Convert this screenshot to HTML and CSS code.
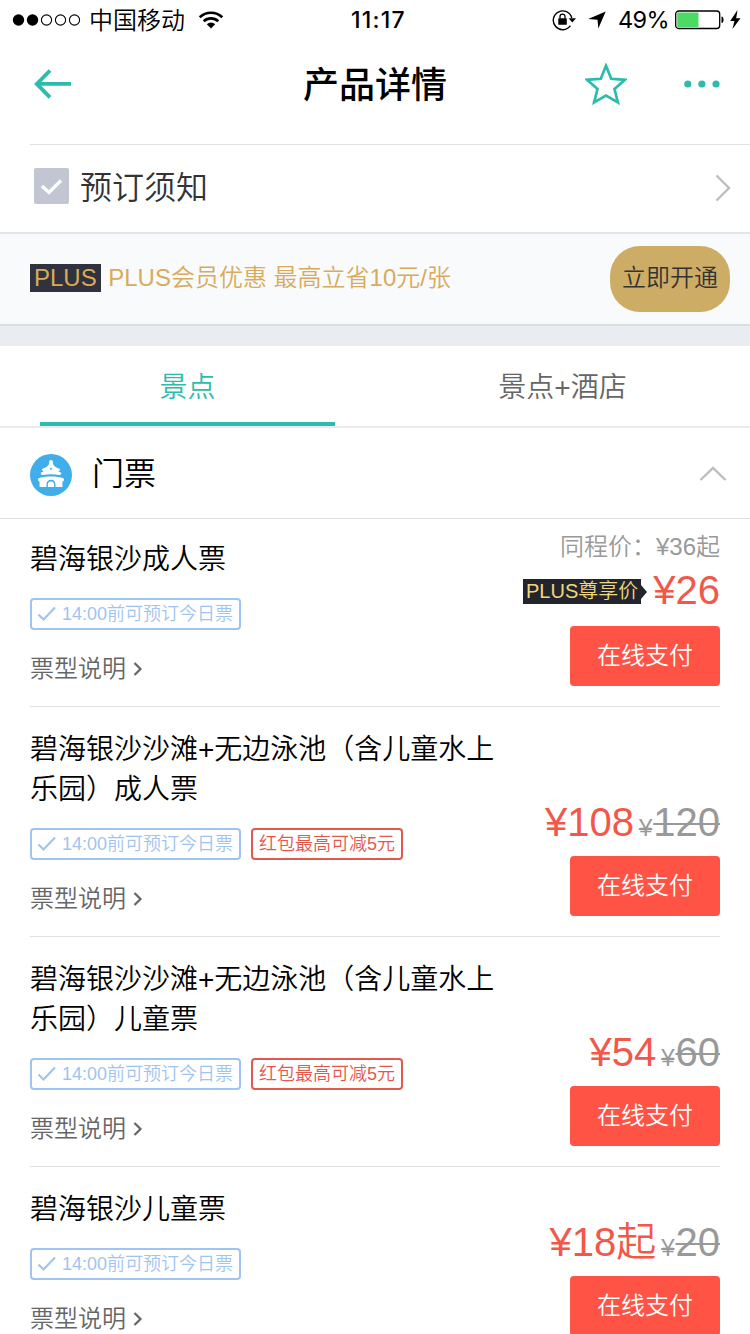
FILE: index.html
```html
<!DOCTYPE html>
<html lang="zh-CN">
<head>
<meta charset="utf-8">
<title>产品详情</title>
<link rel="stylesheet" href="styles.css">
</head>
<body>
<svg class="defs" width="0" height="0">
  <symbol id="check" viewBox="0 0 20 18"><path d="M1.500 9.500l5 5L18 2.500" fill="none" stroke="currentColor" stroke-width="2.200"/></symbol>
  <symbol id="more" viewBox="0 0 10 16"><path d="M1.500 2l6 6-6 6" fill="none" stroke="currentColor" stroke-width="2.200"/></symbol>
</svg>
<div class="screen">
  <div class="status">
    <div class="status-left">
      <svg width="70" height="14" viewBox="0 0 70 14"><circle cx="6.500" cy="7" r="5.700"/><circle cx="20.500" cy="7" r="5.700"/><g fill="none" stroke="#000" stroke-width="1.100"><circle cx="34.500" cy="7" r="5.100"/><circle cx="48.500" cy="7" r="5.100"/><circle cx="62.500" cy="7" r="5.100"/></g></svg>
      <span class="carrier">中国移动</span>
      <svg class="wifi" width="26" height="20" viewBox="0 0 26 20"><g fill="none" stroke="#000" stroke-width="2.600"><path d="M1.700 7.300a16.200 16.200 0 0 1 22.600 0"/><path d="M5.700 11.300a10.600 10.600 0 0 1 14.600 0"/></g><path d="M13 18.500l-4.200-4.200a6 6 0 0 1 8.400 0z"/></svg>
    </div>
    <div class="clock">11:17</div>
    <div class="status-right">
      <svg class="lock" width="24" height="22" viewBox="0 0 24 22"><path d="M18.400 16.700A9.400 9.400 0 1 1 19.800 9" fill="none" stroke="#000" stroke-width="1.400"/><path d="M16.600 9.200H24L20.300 13.400z"/><rect x="6.300" y="9.300" width="8.500" height="6.500" rx=".6"/><path d="M8 9.500V7.600a2.500 2.500 0 0 1 5 0v1.900" fill="none" stroke="#000" stroke-width="1.300"/></svg>
      <svg class="locate" width="18" height="18" viewBox="0 0 18 18"><path d="M17.700.4L10.300 17.500 9.500 8.800.2 8z"/></svg>
      <span class="percent">49%</span>
      <svg width="66" height="20" viewBox="0 0 66 20"><rect x=".7" y="1" width="44" height="17.500" rx="3" fill="none" stroke="#000" stroke-width="1.300"/><rect x="2.200" y="2.600" width="21.300" height="14.400" rx="1" fill="#4cd964"/><path d="M46.500 6.500c2.800.3 2.800 6.300 0 6.600z"/><path d="M62.500 0l-7.300 11h4.200l-1.900 8 8-10.800h-4.300z"/></svg>
    </div>
  </div>

  <div class="nav">
    <svg class="back" width="38" height="30" viewBox="0 0 38 30"><path d="M16 1.500L2.800 14.900 16 28.300M3 14.900h34" fill="none" stroke="#2cbbae" stroke-width="3.800"/></svg>
    <h1>产品详情</h1>
    <div class="nav-actions">
      <svg width="42" height="42" viewBox="0 0 42 42"><path d="M21 2.800l5.200 13 13.800 1-10.500 9.200 3.400 13.400L21 32.600 9.100 39.400 12.500 26 2 16.800l13.800-1z" fill="none" stroke="#2cbbae" stroke-width="2.700"/></svg>
      <svg width="36" height="8" viewBox="0 0 36 8" fill="#2cbbae"><circle cx="3.800" cy="4" r="3.600"/><circle cx="17.900" cy="4" r="3.600"/><circle cx="32" cy="4" r="3.600"/></svg>
    </div>
  </div>

  <div class="notice">
    <svg class="notice-icon" width="35" height="36" viewBox="0 0 35 36"><rect width="35" height="36" rx="2" fill="#c1c6d2"/><path d="M8 18l7 6.500L27 12.500" fill="none" stroke="#fff" stroke-width="3.300"/></svg>
    <span class="notice-text">预订须知</span>
    <svg class="go" width="16" height="28" viewBox="0 0 16 28"><path d="M1.500 1.500L14 14 1.500 26.500" fill="none" stroke="#bdbdbd" stroke-width="2.400"/></svg>
  </div>

  <div class="plus">
    <span class="plus-badge">PLUS</span>
    <span class="plus-text">PLUS会员优惠 最高立省10元/张</span>
    <span class="plus-button">立即开通</span>
  </div>
  <div class="divider"></div>

  <div class="tabs">
    <div class="tab active">景点</div>
    <div class="tab">景点+酒店</div>
  </div>

  <div class="group">
    <svg class="group-icon" width="42" height="42" viewBox="0 0 42 42"><circle cx="21" cy="21" r="21" fill="#40aeea"/><g fill="#fff"><circle cx="21" cy="7.800" r="1.900"/><path d="M19.700 7.500h2.600l.8 2.700c1.200 2.300 3.400 3.500 6.400 4.500 1 1.100.3 2.300-1.300 2.600.7.700 1.700 1 2.800 1.300.8 1.200-.1 2.400-1.500 2.500-5.500-1-11.500-1-17 0-1.400-.1-2.300-1.300-1.500-2.500 1.100-.3 2.100-.6 2.800-1.300-1.600-.3-2.300-1.500-1.300-2.600 3-1 5.200-2.200 6.400-4.500z"/><path d="M8.200 24.400c6.800-2.400 18.800-2.400 25.600 0 .6 1.500-.2 2.900-1.400 3.400V33H25.500v-2.700a4.500 4.500 0 0 0-9 0V33H9.600v-5.200c-1.200-.5-2-1.900-1.400-3.400z"/><path d="M17.900 33v-2.500a3.100 3.100 0 0 1 6.200 0V33z"/></g><path d="M21 13.200l1.100 1.500-1.100 1.500-1.100-1.500z" fill="#40aeea"/></svg>
    <span class="group-title">门票</span>
    <svg class="fold" width="28" height="16" viewBox="0 0 28 16"><path d="M1.500 14L14 2l12.500 12" fill="none" stroke="#bdbdbd" stroke-width="2.400"/></svg>
  </div>

  <div class="tickets">
    <div class="ticket">
      <div class="info">
        <div class="name">碧海银沙成人票</div>
        <div class="tags"><span class="tag blue"><svg width="20" height="18"><use href="#check"/></svg>14:00前可预订今日票</span></div>
        <div class="explain">票型说明<svg width="10" height="16"><use href="#more"/></svg></div>
      </div>
      <div class="buy">
        <div class="list-price">同程价：¥36起</div>
        <div class="price member"><span class="member-tag">PLUS尊享价</span><span class="now">¥26</span></div>
        <div class="pay">在线支付</div>
      </div>
    </div>
    <div class="ticket">
      <div class="info">
        <div class="name">碧海银沙沙滩+无边泳池（含儿童水上<br>乐园）成人票</div>
        <div class="tags"><span class="tag blue"><svg width="20" height="18"><use href="#check"/></svg>14:00前可预订今日票</span><span class="tag red">红包最高可减5元</span></div>
        <div class="explain">票型说明<svg width="10" height="16"><use href="#more"/></svg></div>
      </div>
      <div class="buy">
        <div class="price"><span class="now">¥108</span><s class="yen">¥</s><s class="was">120</s></div>
        <div class="pay">在线支付</div>
      </div>
    </div>
    <div class="ticket">
      <div class="info">
        <div class="name">碧海银沙沙滩+无边泳池（含儿童水上<br>乐园）儿童票</div>
        <div class="tags"><span class="tag blue"><svg width="20" height="18"><use href="#check"/></svg>14:00前可预订今日票</span><span class="tag red">红包最高可减5元</span></div>
        <div class="explain">票型说明<svg width="10" height="16"><use href="#more"/></svg></div>
      </div>
      <div class="buy">
        <div class="price"><span class="now">¥54</span><s class="yen">¥</s><s class="was">60</s></div>
        <div class="pay">在线支付</div>
      </div>
    </div>
    <div class="ticket">
      <div class="info">
        <div class="name">碧海银沙儿童票</div>
        <div class="tags"><span class="tag blue"><svg width="20" height="18"><use href="#check"/></svg>14:00前可预订今日票</span></div>
        <div class="explain">票型说明<svg width="10" height="16"><use href="#more"/></svg></div>
      </div>
      <div class="buy">
        <div class="price"><span class="now">¥18起</span><s class="yen">¥</s><s class="was">20</s></div>
        <div class="pay">在线支付</div>
      </div>
    </div>
  </div>
</div>
</body>
</html>
```
FILE: styles.css
```css
* { box-sizing: border-box; }
html, body { margin: 0; height: 1334px; overflow: hidden; background: #fff; }
body { font-family: "Liberation Sans", "Noto Sans CJK SC", sans-serif; font-weight: 350; color: #000; }
svg { display: block; flex: none; }
.defs { position: absolute; }
.screen { width: 750px; height: 1334px; overflow: hidden; white-space: nowrap; }

.status { display: grid; grid-template-columns: 1fr auto 1fr; align-items: center; height: 40px; padding: 0 9px 0 12px; font-family: Inter, "Noto Sans CJK SC", sans-serif; font-size: 24px; line-height: 40px; }
.status-left, .status-right { display: flex; align-items: center; height: 40px; }
.status-right { justify-content: flex-end; font-weight: 400; }
.carrier { margin-left: 7px; padding-top: 1px; font-weight: 350; }
.wifi { margin-left: 13px; }
.clock { padding: 0 0 0 4px; font-weight: 500; font-size: 23px; letter-spacing: 1.200px; }
.locate { margin: 0 12px; }
.percent { margin-right: 6px; font-size: 23.500px; letter-spacing: -.6px; }

.nav { display: grid; grid-template-columns: 1fr auto 1fr; align-items: center; height: 104px; padding: 0 30px 16px 34px; }
.nav h1 { margin: 0 2px 0 -2px; padding-top: 4px; font-size: 36px; line-height: 50px; font-weight: 500; }
.nav-actions { display: flex; align-items: center; justify-content: flex-end; gap: 57px; }

.notice { display: flex; align-items: center; height: 88px; margin-left: 30px; padding: 0 19px 2px 4px; border-top: 1px solid #e2e2e4; }
.notice-icon { margin-bottom: 3px; }
.notice-text { margin-left: 11px; font-size: 32px; line-height: 44px; color: #333; }
.go { margin-left: auto; }

.plus { display: flex; align-items: center; height: 94px; padding: 0 20px 0 30px; border-top: 2px solid #e4e5e8; border-bottom: 2px solid #dcdde0; background: #f9fafc; font-size: 24px; color: #d8ab5a; }
.plus-badge { height: 28px; margin-bottom: 2px; padding: 0 4px; line-height: 28px; background: #30323d; }
.plus-text { margin-left: 7.500px; padding-bottom: 2px; line-height: 36px; }
.plus-button { width: 120px; height: 66px; margin-left: auto; border-radius: 30px; background: #cdac66; color: #333; line-height: 64px; text-align: center; }
.divider { height: 20px; background: #e9ecf0; }

.tabs { display: grid; grid-template-columns: 1fr 1fr; height: 82px; border-bottom: 2px solid #e9ebf0; }
.tab { font-size: 28px; line-height: 83px; height: 80px; text-align: center; color: #666; }
.tab.active { margin: 0 40px; border-bottom: 4px solid #2cbbae; color: #2cbbae; }

.group { display: flex; align-items: center; height: 91px; padding: 2px 23px 0 30px; border-bottom: 1px solid #e2e2e4; }
.group-icon { margin-top: 2px; }
.group-title { margin-left: 20px; font-size: 32px; line-height: 44px; }
.fold { margin-left: auto; }

.tickets { padding: 0 30px; }
.ticket { display: flex; justify-content: space-between; padding: 23px 0 17px; border-bottom: 1px solid #e2e2e4; }
.ticket:first-child { padding-top: 21px; }
.name { font-size: 28px; line-height: 40px; }
.tags { display: flex; gap: 10px; margin-top: 18px; }
.tag { display: flex; align-items: center; height: 32px; border: 2px solid; border-radius: 4px; font-size: 18px; line-height: 28px; }
.blue { width: 211px; padding-left: 5px; color: #9fc4f1; }
.blue svg { margin-right: 5px; }
.red { padding: 0 6px; color: #e4574d; }
.explain { display: flex; align-items: center; margin-top: 19px; font-size: 24px; line-height: 40px; color: #666; }
.explain svg { margin-left: 7px; }
.buy { display: flex; flex-direction: column; align-items: flex-end; justify-content: flex-end; margin-top: -12px; padding-bottom: 3px; }
.list-price { height: 34px; font-size: 24px; line-height: 33px; color: #999; }
.price { display: flex; align-items: baseline; height: 64px; font-size: 40px; line-height: 60px; }
.now { color: #f3574a; }
.yen { margin: 0 1px 0 5px; font-size: 24px; color: #999; text-decoration-thickness: 2px; }
.was { color: #999; text-decoration-thickness: 2px; }
.member { align-items: center; height: 62px; }
.member .now { align-self: flex-start; line-height: 52px; }
.member-tag { position: relative; height: 25px; margin: 0 12px 7px 0; padding: 0 3px; background: #22252e; color: #f2d679; font-size: 20px; line-height: 25px; }
.member-tag::after { content: ""; position: absolute; left: 100%; top: 6px; border: 7px solid transparent; border-left: 6px solid #22252e; border-right: 0; }
.pay { width: 150px; height: 60px; border-radius: 4px; background: #ff5346; color: #fff; font-size: 24px; line-height: 60px; text-align: center; }
```
